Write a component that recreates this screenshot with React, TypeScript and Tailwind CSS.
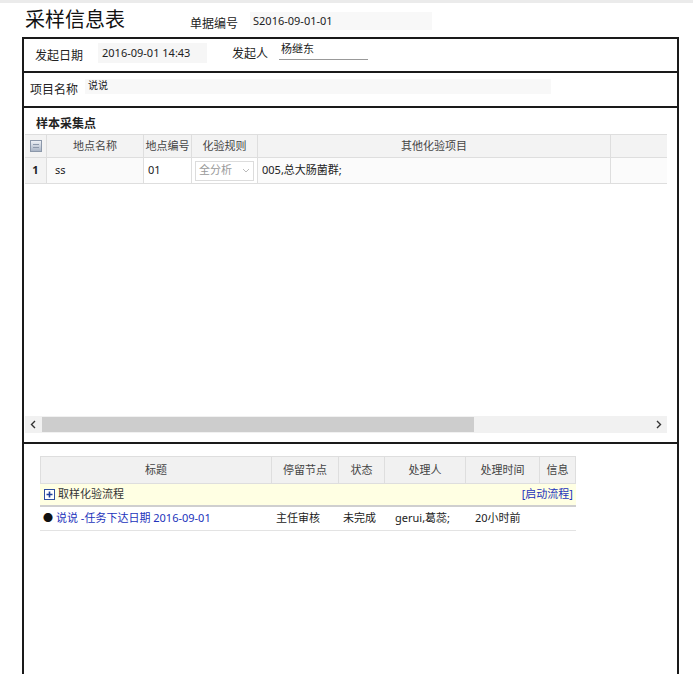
import React from "react"

const font = "font-['Noto_Sans','Noto_Sans_CJK_SC',sans-serif]"

function PlusBox() {
  return (
    <svg width="11" height="11" viewBox="0 0 11 11" className="shrink-0">
      <rect x="0.5" y="0.5" width="10" height="10" fill="#fff" stroke="#2f4f9f" />
      <path d="M5.5 2.5v6M2.5 5.5h6" stroke="#1f3f99" strokeWidth="1.6" />
    </svg>
  )
}

function HeaderCheck() {
  return (
    <div className="w-[12px] h-[12px] border border-[#8c98aa] bg-gradient-to-b from-[#eef1f6] to-[#aab5c6] flex flex-col justify-center gap-[2px] px-[2px]">
      <div className="h-px bg-[#8d99ab]" />
      <div className="h-px bg-[#8d99ab]" />
    </div>
  )
}

export default function App() {
  return (
    <div className={`${font} w-[693px] h-[674px] overflow-hidden bg-white text-[#222] relative`}>
      <div className="h-[3px] bg-[#ebebeb]" />
      {/* title bar */}
      <div className="flex items-start h-[34px] pl-[25px]">
        <div className="text-[20px] leading-[28px] mt-[3px] text-[#111]">采样信息表</div>
        <div className="text-[12px] leading-[16px] mt-[13px] ml-[65px]">单据编号</div>
        <div className="ml-[12px] mt-[9px] w-[182px] h-[18px] bg-[#f8f8f8] text-[11px] leading-[18px] pl-[3px]">
          S2016-09-01-01
        </div>
      </div>

      {/* main box */}
      <div className="ml-[22px] w-[657px] h-[700px] border-2 border-[#1a1a1a] flex flex-col">
        {/* row 1 */}
        <div className="h-[34px] shrink-0 border-b-2 border-[#1a1a1a] flex items-center">
          <div className="text-[12px] ml-[11px] mt-[1px]">发起日期</div>
          <div className="ml-[15px] w-[109px] h-[20px] bg-[#f6f6f6] text-[11px] leading-[20px] pl-[4px] -mt-[5px]">
            2016-09-01 14:43
          </div>
          <div className="text-[12px] ml-[25px] -mt-[2px]">发起人</div>
          <div className="ml-[11px] w-[89px] h-[18px] border-b border-[#999] text-[11px] leading-[14px] pl-[2px] -mt-[8px]">
            杨继东
          </div>
        </div>

        {/* row 2 */}
        <div className="h-[35px] shrink-0 border-b-2 border-[#1a1a1a] flex items-center">
          <div className="text-[12px] ml-[6px] mt-[1px]">项目名称</div>
          <div className="ml-[7px] w-[466px] h-[15px] bg-[#f8f8f8] text-[10px] leading-[13px] pl-[3px] -mt-[7px]">
            说说
          </div>
        </div>

        {/* sample points */}
        <div className="h-[336px] shrink-0 border-b-2 border-[#1a1a1a] flex flex-col">
          <div className="text-[12px] font-bold leading-[16px] ml-[12px] mt-[8px] mb-[2px]">样本采集点</div>
          <div className="ml-[1px] w-[642px] flex-1 flex flex-col">
            <div className="flex-1">
              <div className="flex h-[24px] bg-[#f3f3f3] border-t border-b border-[#dedede] text-[11px] text-[#444]">
                <div className="w-[22px] border-r border-[#dedede] flex items-center justify-center">
                  <HeaderCheck />
                </div>
                <div className="w-[97px] border-r border-[#dedede] flex items-center justify-center">地点名称</div>
                <div className="w-[48px] border-r border-[#dedede] flex items-center justify-center">地点编号</div>
                <div className="w-[66px] border-r border-[#dedede] flex items-center justify-center">化验规则</div>
                <div className="w-[353px] border-r border-[#dedede] flex items-center justify-center">其他化验项目</div>
                <div className="flex-1" />
              </div>
              <div className="flex h-[26px] border-b border-[#dedede] text-[11px]">
                <div className="w-[22px] border-r border-[#dedede] flex items-center justify-center font-bold bg-[#f3f3f3]">1</div>
                <div className="w-[97px] border-r border-[#dedede] flex items-center pl-[8px] bg-[#fafafa]">ss</div>
                <div className="w-[48px] border-r border-[#dedede] flex items-center pl-[4px]">01</div>
                <div className="w-[66px] border-r border-[#dedede] flex items-center pl-[3px]">
                  <div className="w-[59px] h-[20px] border border-[#dcdcdc] flex items-center justify-between px-[3px] text-[#999] text-[11px]">
                    <span>全分析</span>
                    <svg width="8" height="5" viewBox="0 0 8 5">
                      <path d="M1 1l3 3 3-3" fill="none" stroke="#bbb" strokeWidth="1" />
                    </svg>
                  </div>
                </div>
                <div className="w-[353px] border-r border-[#dedede] flex items-center pl-[4px] bg-[#fbfbfb]">005,总大肠菌群;</div>
                <div className="flex-1 bg-[#fbfbfb]" />
              </div>
            </div>
            {/* scroll bar */}
            <div className="h-[17px] mb-[9px] flex bg-[#f1f1f1]">
              <div className="w-[16px] flex items-center justify-center">
                <svg width="6" height="9" viewBox="0 0 6 9">
                  <path d="M5 1L1.5 4.5 5 8" fill="none" stroke="#333" strokeWidth="1.4" />
                </svg>
              </div>
              <div className="w-[432px] my-[1px] ml-[1px] bg-[#cdcdcd]" />
              <div className="flex-1" />
              <div className="w-[17px] flex items-center justify-center">
                <svg width="6" height="9" viewBox="0 0 6 9">
                  <path d="M1 1l3.5 3.5L1 8" fill="none" stroke="#333" strokeWidth="1.4" />
                </svg>
              </div>
            </div>
          </div>
        </div>

        {/* flow table */}
        <div className="pt-[12px] pl-[16px]">
          <div className="w-[536px] text-[11px]">
            <div className="flex h-[28px] bg-[#f1f1f1] border-t border-b border-[#dedede] text-[#444]">
              <div className="w-[232px] border-l border-r border-[#dedede] flex items-center justify-center">标题</div>
              <div className="w-[67px] border-r border-[#dedede] flex items-center justify-center">停留节点</div>
              <div className="w-[46px] border-r border-[#dedede] flex items-center justify-center">状态</div>
              <div className="w-[81px] border-r border-[#dedede] flex items-center justify-center">处理人</div>
              <div className="w-[74px] border-r border-[#dedede] flex items-center justify-center">处理时间</div>
              <div className="flex-1 border-r border-[#dedede] flex items-center justify-center">信息</div>
            </div>
            <div className="flex items-center h-[23px] bg-[#ffffe3] border-b-2 border-[#cfcfcf] pl-[4px] pr-[3px]">
              <PlusBox />
              <span className="ml-[3px] text-[#333]">取样化验流程</span>
              <span className="ml-auto text-[#2233bb]">[启动流程]</span>
            </div>
            <div className="flex items-center h-[24px] border-b border-[#e3e3e3]">
              <div className="w-[232px] pl-[3px] flex items-center">
                <span className="text-[#111] text-[10px] mr-[3px]">●</span>
                <span className="text-[#2233bb]">说说 -任务下达日期 2016-09-01</span>
              </div>
              <div className="w-[67px] pl-[4px]">主任审核</div>
              <div className="w-[46px] pl-[4px]">未完成</div>
              <div className="w-[81px] pl-[10px]">gerui,葛蕊;</div>
              <div className="w-[74px] pl-[9px]">20小时前</div>
            </div>
          </div>
        </div>
      </div>
    </div>
  )
}
